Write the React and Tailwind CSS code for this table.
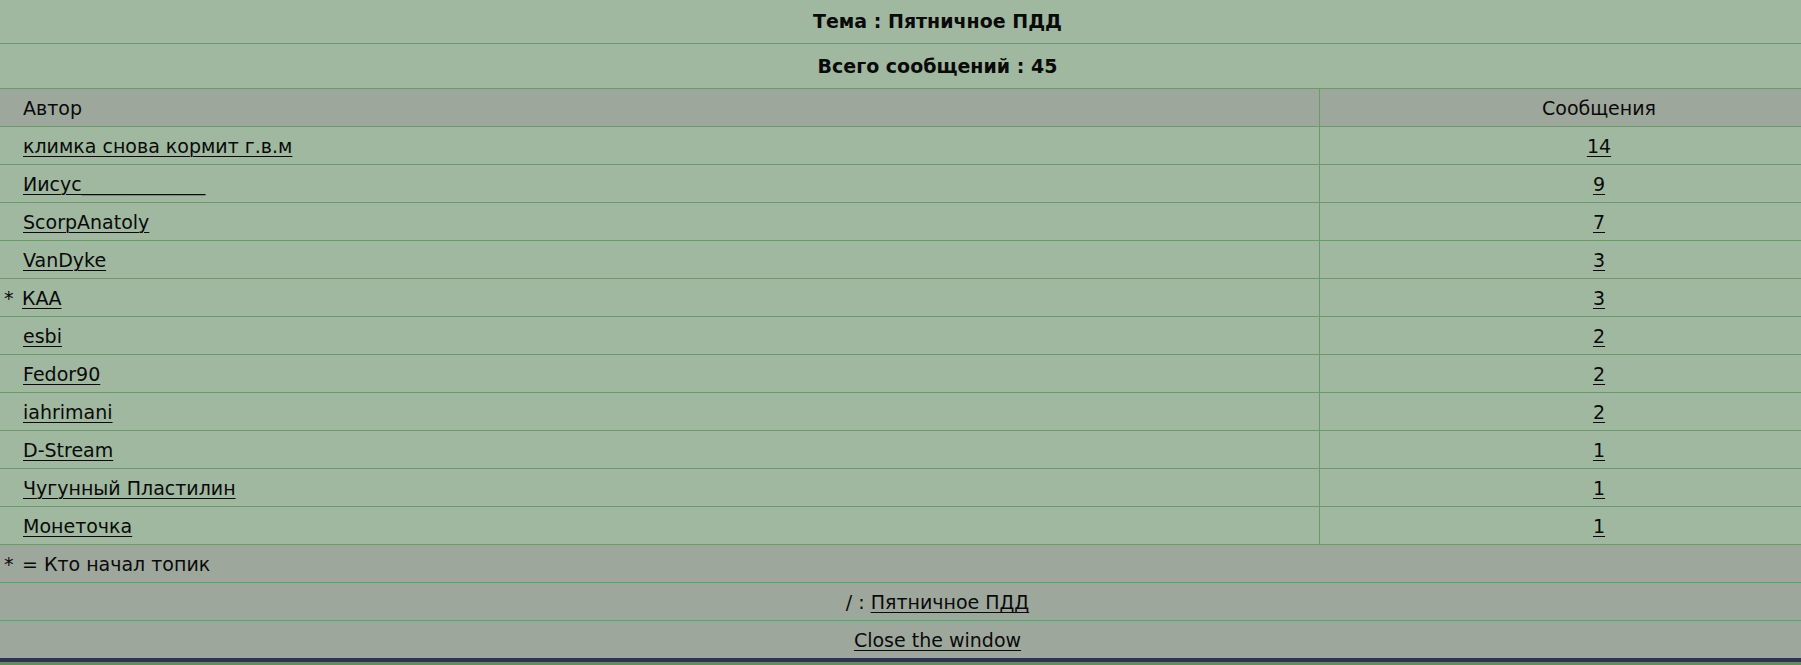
import React from "react";

const rows = [
  { name: "климка снова кормит г.в.м", n: "14" },
  { name: "Иисус_____________", n: "9" },
  { name: "ScorpAnatoly", n: "7" },
  { name: "VanDyke", n: "3" },
  { name: "КАА", n: "3", star: true },
  { name: "esbi", n: "2" },
  { name: "Fedor90", n: "2" },
  { name: "iahrimani", n: "2" },
  { name: "D-Stream", n: "1" },
  { name: "Чугунный Пластилин", n: "1" },
  { name: "Монеточка", n: "1" },
];

const link = "underline underline-offset-[3px] decoration-1";

export default function App() {
  return (
    <div
      className="w-full bg-[#9fb89f] text-[#0a0a0a] text-[19px] leading-none"
      style={{ fontFamily: '"DejaVu Sans", Verdana, sans-serif' }}
    >
      <div className="h-[44px] border-b border-[#6b9a6b] flex items-center justify-center pl-[74px] font-bold">
        Тема : Пятничное ПДД
      </div>
      <div className="h-[45px] border-b border-[#6b9a6b] flex items-center justify-center pl-[74px] font-bold">
        Всего сообщений : 45
      </div>
      <div className="h-[38px] border-b border-[#6b9a6b] flex bg-[#9ea79c]">
        <div className="w-[1320px] border-r border-[#6b9a6b] flex items-center pl-[23px] pt-[2px]">Автор</div>
        <div className="flex-1 flex items-center justify-center pl-[77px] pt-[2px]">Сообщения</div>
      </div>
      {rows.map((r) => (
        <div key={r.name} className="h-[38px] border-b border-[#6b9a6b] flex">
          <div className={`w-[1320px] border-r border-[#6b9a6b] flex items-center pt-[2px] ${r.star ? "pl-[4px]" : "pl-[23px]"}`}>
            {r.star && <span className="inline-block w-[18px]">*</span>}
            <a href="#" className={link}>{r.name}</a>
          </div>
          <div className="flex-1 flex items-center justify-center pl-[77px] pt-[2px]">
            <a href="#" className={link}>{r.n}</a>
          </div>
        </div>
      ))}
      <div className="h-[38px] border-b border-[#6b9a6b] flex items-center pl-[4px] pt-[2px] bg-[#9ea79c]">
        <span className="inline-block w-[18px]">*</span>
        <span className="whitespace-pre">= Кто начал топик</span>
      </div>
      <div className="h-[38px] border-b border-[#6b9a6b] flex items-center justify-center pl-[74px] pt-[2px] bg-[#9ea79c]">
        <span className="whitespace-pre">/ : </span>
        <a href="#" className={link}>Пятничное ПДД</a>
      </div>
      <div className="h-[37px] flex items-center justify-center pl-[74px] pt-[2px] bg-[#9ea79c]">
        <a href="#" className={link}>Close the window</a>
      </div>
      <div className="h-[4px] bg-[#2f3350]" />
      <div className="h-[3px] bg-[#5f8f5f]" />
    </div>
  );
}
